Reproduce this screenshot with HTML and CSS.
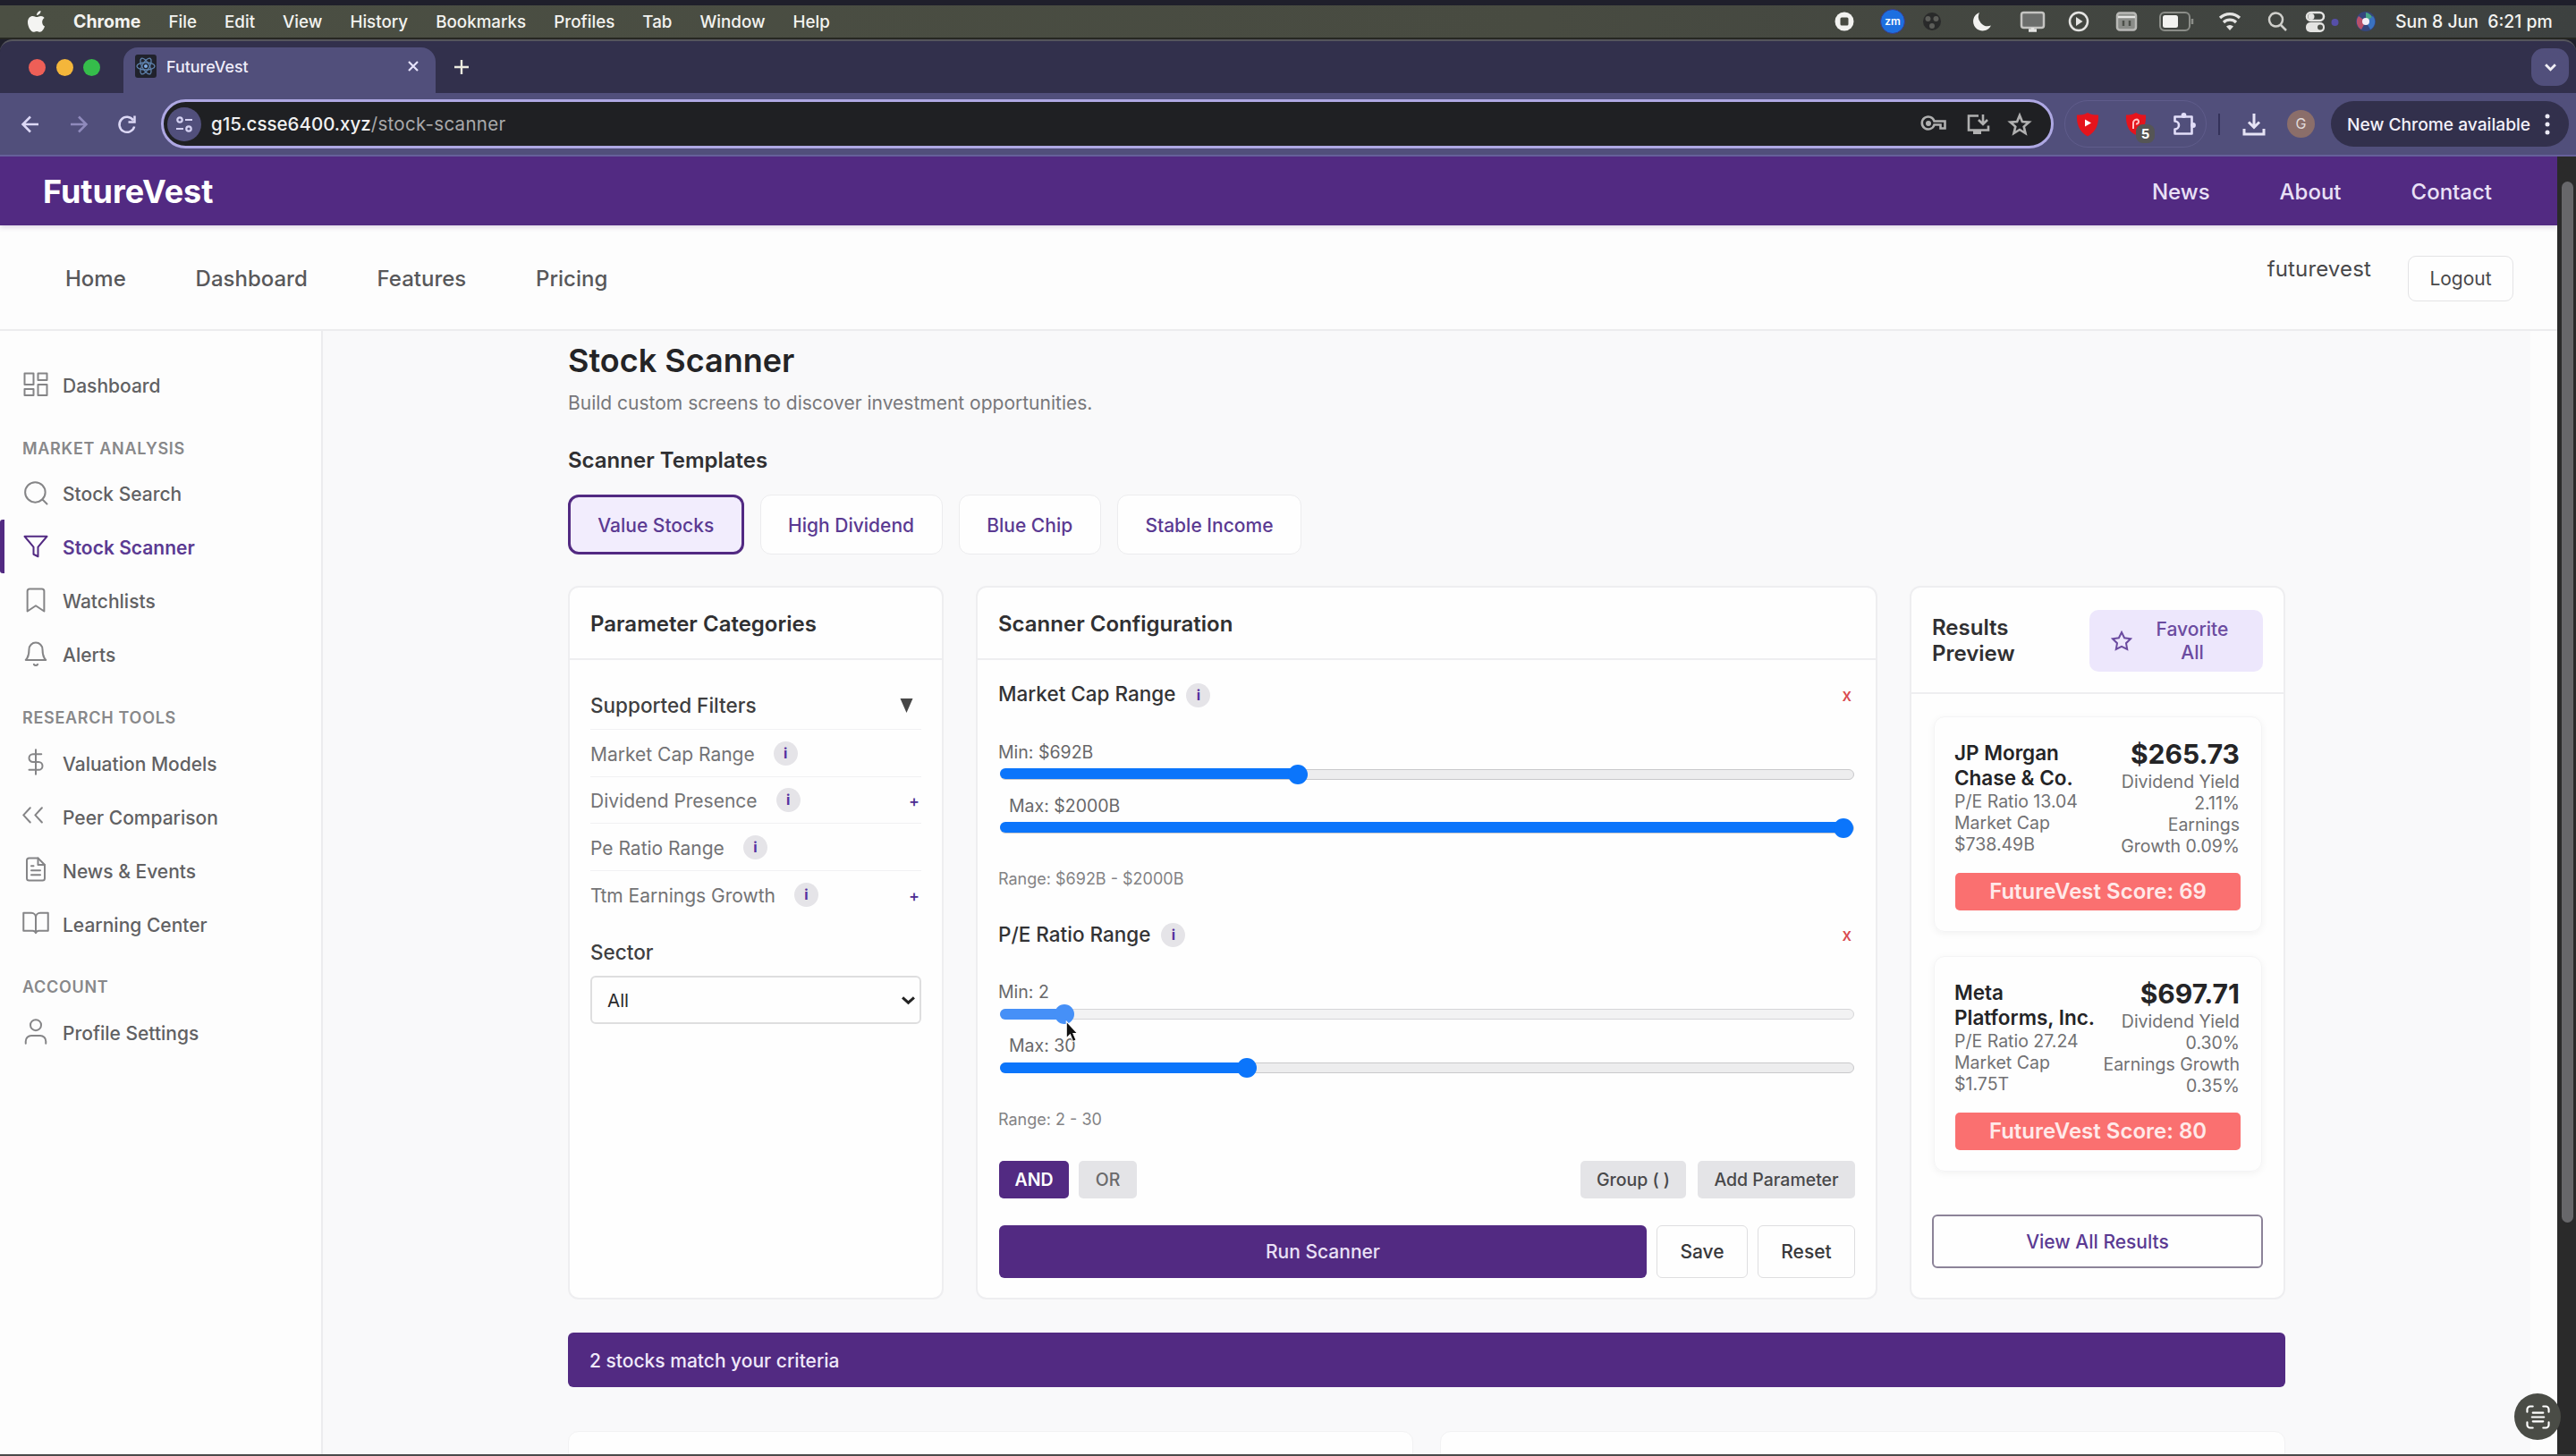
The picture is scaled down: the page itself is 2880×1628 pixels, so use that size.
FILE: index.html
```html
<!DOCTYPE html>
<html lang="en">
<head>
<meta charset="utf-8">
<title>FutureVest</title>
<link rel="stylesheet" href="styles.css">
</head>
<body>
<div class="screen">
  <div class="menubar">
    <svg class="apple" viewBox="0 0 22 26"><path d="M15.5 1c.2 2.600-2 5-4.400 5C10.900 3.500 13 1.300 15.500 1zM20 18.600c-1.200 3.400-3.200 6.200-5.200 6.200-1.400 0-2-.9-3.700-.9s-2.400.9-3.700.9C4.500 24.800 1 18.800 1 13.800 1 9.500 3.700 7 6.700 7c1.700 0 3 1.100 4.300 1.100S14 6.900 15.900 6.900c1.500 0 2.900.8 3.700 2-3.500 2.200-3 7.700.4 9.700z" fill="#f4f4f2"/></svg>
    <nav class="menus"><b>Chrome</b><span>File</span><span>Edit</span><span>View</span><span>History</span><span>Bookmarks</span><span>Profiles</span><span>Tab</span><span>Window</span><span>Help</span></nav>
    <svg class="status" viewBox="2040 0 620 36" fill="none" stroke="#e4e4e2" stroke-width="2.500">
      <circle cx="2062" cy="18" r="10.500" fill="#f2f2f0" stroke="none"/><rect x="2057.500" y="13.500" width="9" height="9" rx="1.500" fill="#484b42" stroke="none"/>
      <circle cx="2116" cy="18" r="13.500" fill="#1d6fe0" stroke="#3b3a86" stroke-width="1"/><text x="2116" y="22" class="zm">zm</text>
      <circle cx="2160" cy="18" r="10" fill="#292a2a" stroke="none"/><g fill="#5c5d59" stroke="none"><circle cx="2155.500" cy="15" r="3"/><circle cx="2164.500" cy="15" r="3"/><circle cx="2160" cy="23" r="3"/></g>
      <path d="M2213 8a10.500 10.500 0 1 0 13 14.500A10.500 10.500 0 0 1 2213 8z" fill="#f2f2f0" stroke="none"/>
      <rect x="2260" y="8" width="25" height="17" rx="2.500" fill="#6c6e6c" stroke="#c4c4c1"/><path d="M2268 28h9M2272.500 25v3" stroke-width="3.500"/>
      <circle cx="2324" cy="18" r="10"/><path d="M2321 13v10l7.500-5z" fill="#e4e4e2" stroke="none"/>
      <rect x="2367" y="8.500" width="21" height="19" rx="3" fill="#8a8c88" stroke="#b9b9b6"/><path d="M2368 13h19" /><path d="M2374 17v6M2381 17v6" stroke="#4c4f49"/>
      <rect x="2415" y="8" width="33" height="20" rx="5" stroke="#8b8d88" stroke-width="2"/><rect x="2418" y="11" width="17" height="14" rx="2.500" fill="#f2f2f0" stroke="none"/><path d="M2451 15v6" stroke="#8b8d88"/>
      <path d="M2482 14a16 16 0 0 1 22 0M2486 19a10 10 0 0 1 14 0" stroke-width="3.200"/><path d="M2489 23.500a6 6 0 0 1 8 0l-4 4.500z" fill="#e4e4e2" stroke="none"/>
      <circle cx="2544.500" cy="16" r="7.500" stroke="#cfcfcb"/><path d="M2550 22l6 6" stroke="#cfcfcb"/>
      <rect x="2579" y="8" width="19" height="9" rx="4.500"/><rect x="2578" y="19" width="21" height="11" rx="5" fill="#e4e4e2" stroke="none"/><circle cx="2584" cy="12.500" r="3.500" fill="#e4e4e2" stroke="none"/><circle cx="2594" cy="24.500" r="3" fill="#4c4f49" stroke="none"/>
      <circle cx="2610.500" cy="19" r="4" fill="#564fa8" stroke="none"/>
      <circle cx="2645" cy="18" r="11" fill="#35467e" stroke="none"/><path d="M2645 18l-8-6a10 10 0 0 0 3 15z" fill="#b8506a" stroke="none"/><path d="M2645 18l8-6a10 10 0 0 1-3 15z" fill="#3a72c0" stroke="none"/><path d="M2645 8a10 10 0 0 1 7 5l-7 5z" fill="#47a588" stroke="none"/><circle cx="2645" cy="18" r="4" fill="#f3eef8" stroke="none"/>
    </svg>
    <div class="clock">Sun 8 Jun&nbsp; 6:21 pm</div>
  </div>
  <div class="tabstrip">
    <div class="lights"><i class="red"></i><i class="amber"></i><i class="green"></i></div>
    <div class="tab">
      <svg class="favicon" viewBox="0 0 24 26"><rect width="24" height="26" rx="3" fill="#20222c"/><g fill="none" stroke="#5f83ae" stroke-width="1.300"><ellipse cx="12" cy="13" rx="10" ry="4"/><ellipse cx="12" cy="13" rx="10" ry="4" transform="rotate(60 12 13)"/><ellipse cx="12" cy="13" rx="10" ry="4" transform="rotate(120 12 13)"/></g><circle cx="12" cy="13" r="2" fill="#7fb0ea"/></svg>
      <span>FutureVest</span>
      <svg class="close" viewBox="0 0 12 12"><path d="M1 1l10 10M11 1L1 11" stroke="#e6e3fb" stroke-width="2.200"/></svg>
    </div>
    <svg class="newtab" viewBox="0 0 16 16"><path d="M8 0v16M0 8h16" stroke="#ecebdf" stroke-width="2.400"/></svg>
    <div class="tabsearch"><svg viewBox="0 0 12 8"><path d="M1 1l5 5 5-5" fill="none" stroke="#f0eff5" stroke-width="2.600"/></svg></div>
  </div>
  <div class="toolbar">
    <svg class="navicons" viewBox="20 0 140 40" fill="none" stroke="#dcd8f5" stroke-width="2.500"><path d="M43 20H26M34 11.500L25.500 20l8.500 8.500"/><path d="M79 20h17M88 11.500l8.500 8.500-8.500 8.500" stroke="#8f8abc"/><path d="M149 15.500a8.500 8.500 0 1 0 1.200 7"/><path d="M150.500 10.500v7h-7"/></svg>
    <div class="urlbar">
      <span class="site"><svg viewBox="0 0 20 20" fill="none" stroke="#d5d2f3" stroke-width="2.200"><circle cx="5" cy="5" r="2.700"/><path d="M11 5h8M1 15h8"/><circle cx="15" cy="15" r="2.700"/></svg></span>
      <span class="url">g15.csse6400.xyz<em>/stock-scanner</em></span>
      <svg class="urlicons" viewBox="2140 0 140 40" fill="none" stroke="#b0b0b0" stroke-width="2.600"><path d="M2162.500 16.500h12v8h-5v-4h-7a7 7 0 1 1 0-4z"/><circle cx="2156" cy="19" r="3" fill="#b0b0b0" stroke="none"/><path d="M2212 10.500h-11v16h22v-5"/><path d="M2206 29h9" stroke-width="4"/><path d="M2217 9v11M2212 15l5 5 5-5"/><path d="M2258 10l2.900 7 7.600.6-5.800 5 1.800 7.400-6.500-4-6.500 4 1.800-7.400-5.800-5 7.600-.6z"/></svg>
    </div>
    <div class="extensions">
      <svg viewBox="0 0 28 28"><path d="M14 1c4 2.500 8 2.500 12 2.500C26.500 13 24 22 14 27.500 4 22 1.500 13 2 3.500 6 3.500 10 3.500 14 1z" fill="#e5141c"/><path d="M11 8.500v8l7-4z" fill="#fff"/></svg>
      <span class="ext2"><svg viewBox="0 0 28 28"><path d="M14 1c4 2.500 8 2.500 11 2.500C25.500 13 23 22 14 26 5 22 2.500 13 3 3.500 6 3.500 10 3.500 14 1z" fill="#e5141c"/><path d="M11 19v-6a4 4 0 0 1 4-4.500 2.500 2.500 0 1 1-1 5" fill="none" stroke="#ffc4c4" stroke-width="2"/></svg><b>5</b></span>
      <svg viewBox="0 0 28 28"><path d="M3.500 5.500h19v19h-19v-5a4.500 4.500 0 0 0 0-9z" fill="none" stroke="#e2def9" stroke-width="2.600" stroke-linejoin="round"/><circle cx="13.500" cy="4" r="2.900" fill="#e2def9"/><circle cx="24" cy="15" r="2.900" fill="#e2def9"/></svg>
    </div>
    <div class="divider"></div>
    <svg class="download" viewBox="0 0 28 28" fill="none" stroke="#e6e3f5" stroke-width="3"><path d="M14 2v15M8 11.500l6 6 6-6M3 19v6h22v-6"/></svg>
    <div class="avatar">G</div>
    <div class="update">New Chrome available<svg viewBox="0 0 6 24"><g fill="#eceaf5"><circle cx="3" cy="3" r="2.500"/><circle cx="3" cy="12" r="2.500"/><circle cx="3" cy="21" r="2.500"/></g></svg></div>
  </div>

  <div class="viewport">
    <div class="page">
      <header class="topbar"><strong>FutureVest</strong><nav><a>News</a><a>About</a><a>Contact</a></nav></header>
      <div class="subnav"><nav><a>Home</a><a>Dashboard</a><a>Features</a><a>Pricing</a></nav><span class="user">futurevest</span><button class="logout">Logout</button></div>
      <div class="body">
        <aside class="sidebar">
          <a><svg viewBox="0 0 24 24"><rect x="2" y="2" width="8" height="10"/><rect x="14" y="2" width="8" height="6"/><rect x="14" y="12" width="8" height="9.500"/><rect x="2" y="16" width="8" height="5.500"/></svg><span>Dashboard</span></a>
          <h6>MARKET ANALYSIS</h6>
          <a><svg viewBox="0 0 24 24"><circle cx="11.500" cy="11.500" r="9"/><path d="M18 18l4 4"/></svg><span>Stock Search</span></a>
          <a class="active"><svg viewBox="0 0 24 24"><path d="M22 3H2l8 9.500V19l4 2v-8.500z"/></svg><span>Stock Scanner</span></a>
          <a><svg viewBox="0 0 24 24"><path d="M19.500 22L12 17l-7.500 5V4a2 2 0 0 1 2-2h11a2 2 0 0 1 2 2z"/></svg><span>Watchlists</span></a>
          <a><svg viewBox="0 0 24 24"><path d="M18 8A6 6 0 0 0 6 8c0 7-3 9.500-3 9.500h18S18 15 18 8"/><path d="M13.700 21.500a2 2 0 0 1-3.400 0"/></svg><span>Alerts</span></a>
          <h6>RESEARCH TOOLS</h6>
          <a><svg viewBox="0 0 24 24"><path d="M12 1v22M17 5H9.500a3.500 3.500 0 0 0 0 7h5a3.500 3.500 0 0 1 0 7H6"/></svg><span>Valuation Models</span></a>
          <a><svg viewBox="0 0 24 24"><path d="M7 18l-6-6.500L7 5M17.500 18l-6-6.500 6-6.500"/></svg><span>Peer Comparison</span></a>
          <a><svg viewBox="0 0 24 24"><path d="M14 2H6a2 2 0 0 0-2 2v16a2 2 0 0 0 2 2h12a2 2 0 0 0 2-2V8z"/><path d="M14 2v6h6M16 13H8M16 17H8M10 9H8"/></svg><span>News &amp; Events</span></a>
          <a><svg viewBox="0 0 24 24"><path d="M1 3h7a4 4 0 0 1 4 4v14a3 3 0 0 0-3-2H1zM23 3h-7a4 4 0 0 0-4 4v14a3 3 0 0 1 3-2h8z"/></svg><span>Learning Center</span></a>
          <h6>ACCOUNT</h6>
          <a><svg viewBox="0 0 24 24"><path d="M21 23v-2a5 5 0 0 0-5-5H8a5 5 0 0 0-5 5v2"/><circle cx="12" cy="6.500" r="4.800"/></svg><span>Profile Settings</span></a>
        </aside>
        <main>
          <h1>Stock Scanner</h1>
          <p class="lead">Build custom screens to discover investment opportunities.</p>
          <h2>Scanner Templates</h2>
          <div class="templates"><button class="on">Value Stocks</button><button>High Dividend</button><button>Blue Chip</button><button>Stable Income</button></div>
          <div class="columns">
            <section class="card">
              <div class="card-head">Parameter Categories</div>
              <div class="filters">
                <div class="group">Supported Filters<svg viewBox="0 0 14 16"><path d="M0 0h14L7 16z" fill="#474747"/></svg></div>
                <div class="filter">Market Cap Range<i class="info">i</i></div>
                <div class="filter">Dividend Presence<i class="info">i</i><b>+</b></div>
                <div class="filter">Pe Ratio Range<i class="info">i</i></div>
                <div class="filter">Ttm Earnings Growth<i class="info">i</i><b>+</b></div>
                <div class="sector">Sector</div>
                <div class="select">All<svg viewBox="0 0 14 10"><path d="M1 2l6 5.500L13 2" fill="none" stroke="#222" stroke-width="2.800"/></svg></div>
              </div>
            </section>
            <section class="card">
              <div class="card-head">Scanner Configuration</div>
              <div class="config">
                <div class="param">
                  <div class="param-head">Market Cap Range<i class="info">i</i><b>x</b></div>
                  <label>Min: $692B</label>
                  <div class="slider"><div class="track"><div class="fill" style="width:35%"></div></div><i class="thumb" style="left:35%"></i></div>
                  <label class="max">Max: $2000B</label>
                  <div class="slider"><div class="track"><div class="fill" style="width:98.600%"></div></div><i class="thumb" style="left:98.600%"></i></div>
                  <div class="range">Range: $692B - $2000B</div>
                </div>
                <div class="param">
                  <div class="param-head">P/E Ratio Range<i class="info">i</i><b>x</b></div>
                  <label>Min: 2</label>
                  <div class="slider hover"><div class="track"><div class="fill" style="width:7.700%"></div></div><i class="thumb" style="left:7.700%"></i>
                    <svg class="cursor" viewBox="0 0 14 24"><path d="M1 1v18l4-4 3 7.500 3.300-1.500-3-7H13z" fill="#111" stroke="#fff" stroke-width="1"/></svg></div>
                  <label class="max">Max: 30</label>
                  <div class="slider"><div class="track"><div class="fill" style="width:29%"></div></div><i class="thumb" style="left:29%"></i></div>
                  <div class="range">Range: 2 - 30</div>
                </div>
                <div class="logic"><button class="and">AND</button><button class="or">OR</button><button class="grp">Group ( )</button><button class="add">Add Parameter</button></div>
                <div class="run"><button class="primary">Run Scanner</button><button class="save">Save</button><button class="reset">Reset</button></div>
              </div>
            </section>
            <section class="card">
              <div class="card-head preview"><span>Results<br>Preview</span><button><svg viewBox="0 0 24 24"><path d="M12 2l3.100 6.300 6.900 1-5 4.900 1.200 6.800-6.200-3.200L5.800 21 7 14.200l-5-4.900 6.900-1z" fill="none" stroke="#6b4ba0" stroke-width="2"/></svg><span>Favorite<br>All</span></button></div>
              <div class="results">
                <article><div class="stock"><div><strong>JP Morgan<br>Chase &amp; Co.</strong><p>P/E Ratio 13.04<br>Market Cap<br>$738.49B</p></div><div class="num"><em>$265.73</em><p>Dividend Yield<br>2.11%<br>Earnings<br>Growth 0.09%</p></div></div><div class="score">FutureVest Score: 69</div></article>
                <article><div class="stock"><div><strong>Meta<br>Platforms, Inc.</strong><p>P/E Ratio 27.24<br>Market Cap<br>$1.75T</p></div><div class="num"><em>$697.71</em><p>Dividend Yield<br>0.30%<br>Earnings Growth<br>0.35%</p></div></div><div class="score">FutureVest Score: 80</div></article>
                <button class="viewall">View All Results</button>
              </div>
            </section>
          </div>
          <div class="banner">2 stocks match your criteria</div>
          <div class="matches"><div></div><div></div></div>
        </main>
      </div>
    </div>
    <div class="scrollbar"><div></div></div>
  </div>
  <div class="scan"><svg viewBox="0 0 28 28" fill="none" stroke="#fff" stroke-width="2.200" stroke-linecap="round"><path d="M1.500 8V5a3.500 3.500 0 0 1 3.500-3.500h3M20 1.500h3A3.500 3.500 0 0 1 26.500 5v3M26.500 20v3a3.500 3.500 0 0 1-3.500 3.500h-3M8 26.500H5A3.500 3.500 0 0 1 1.500 23v-3M8 9h12M7 14h14M8 19h12"/></svg></div>
</div>
</body>
</html>
```
FILE: styles.css
```css
* { box-sizing: border-box; }
body, h1, h2, h6, p { margin: 0; }
body { font-family: Inter, "Liberation Sans", sans-serif; background: #1f1f2b; }
button { font: inherit; padding: 0; margin: 0; border: 0; display: flex; align-items: center; justify-content: center; }
i, em { font-style: normal; }
svg { display: block; flex: none; }
.screen { width: 2880px; height: 1628px; overflow: hidden; position: relative; display: flex; flex-direction: column; padding-top: 6px; border-bottom: 2px solid #4a4a4a; }

/* system menu bar */
.menubar { height: 38px; flex: none; display: flex; align-items: center; background: linear-gradient(90deg, #4b4f43, #484b41 60%, #3d4140); color: #f3f3f0; border-bottom: 2px solid #262722; }
.apple { width: 22px; height: 26px; margin-left: 30px; }
.menus { display: flex; align-items: baseline; gap: 31px; margin-left: 30px; font-size: 18.800px; font-weight: 500; white-space: nowrap; }
.menus b { font-weight: 700; font-size: 19.500px; }
.status { width: 620px; height: 36px; margin-left: auto; }
.zm { font-size: 12px; font-weight: 600; fill: #fff; stroke: none; text-anchor: middle; }
.clock { width: 202px; margin-left: 18px; font-size: 19.400px; font-weight: 500; white-space: nowrap; }

/* browser frame */
.tabstrip { height: 60px; flex: none; display: flex; align-items: center; background: #32304c; border-top: 2px solid #55555c; border-radius: 14px 14px 0 0; }
.lights { display: flex; gap: 11.500px; margin-left: 32px; }
.lights i { width: 19px; height: 19px; border-radius: 50%; }
.red { background: #ee5f57; }
.amber { background: #f4b63b; }
.green { background: #35bd4b; }
.tab { width: 349px; height: 51px; align-self: flex-end; margin-left: 26px; background: #514f7b; border-radius: 16px 16px 0 0; display: flex; align-items: center; padding: 0 19px 9px 13px; color: #efedfa; font-size: 17.900px; font-weight: 500; }
.favicon { width: 24px; height: 26px; margin-right: 11px; }
.close { width: 12px; height: 12px; margin-left: auto; }
.newtab { width: 16px; height: 16px; margin-left: 21px; }
.tabsearch { width: 42px; height: 42px; border-radius: 14px; background: #514f7b; margin: 0 8px 0 auto; display: flex; align-items: center; justify-content: center; }
.tabsearch svg { width: 13px; height: 9px; }
.toolbar { height: 71px; flex: none; background: #514f7b; border-bottom: 2px solid #66609a; display: flex; align-items: center; padding-left: 20px; }
.navicons { width: 140px; height: 40px; }
.urlbar { width: 2116px; height: 55px; margin-left: 20px; border: 3px solid #aea8e3; border-radius: 28px; background: #1f2023; display: flex; align-items: center; color: #f1f1f1; }
.site { width: 38px; height: 38px; border-radius: 50%; background: #514f7b; margin-left: 4px; display: flex; align-items: center; justify-content: center; }
.site svg { width: 20px; height: 20px; }
.url { margin-left: 11px; font-size: 20.500px; font-weight: 500; }
.url em { color: #a9a9aa; letter-spacing: .3px; font-weight: 400; }
.urlicons { width: 140px; height: 40px; margin-left: auto; margin-right: 13px; }
.extensions { width: 159px; height: 53px; margin-left: 12px; border: 1.500px solid #5f5c8b; border-radius: 26px; display: flex; align-items: center; justify-content: space-between; padding: 0 10px 0 11px; }
.extensions svg { width: 28px; height: 28px; }
.ext2 { position: relative; }
.ext2 b { position: absolute; left: 14px; top: 14px; width: 21px; height: 21px; border-radius: 8px; background: #555; color: #fff; font-size: 15px; line-height: 21px; text-align: center; }
.divider { width: 2px; height: 24px; background: #34325a; margin-left: 13px; }
.download { width: 28px; height: 28px; margin-left: 24px; }
.avatar { width: 31px; height: 31px; border-radius: 50%; background: #8b6e6a; color: #e2dcdc; font-size: 16px; line-height: 31px; text-align: center; margin-left: 23px; }
.update { width: 266px; height: 51px; margin-left: 18px; border-radius: 26px; background: #32304c; color: #f2f0fa; display: flex; align-items: center; justify-content: space-between; padding: 0 21px 0 18px; font-size: 19.200px; font-weight: 500; white-space: nowrap; }
.update svg { width: 6px; height: 24px; }

.viewport { flex: 1; min-height: 0; display: flex; background: #2a2a2a; }
.page { width: 2859px; background: #fdfdfd; display: flex; flex-direction: column; overflow: hidden; }
.scrollbar { width: 21px; padding: 28px 3px 0 5px; }
.scrollbar div { height: 1164px; border-radius: 7px; background: #67676a; }

/* site header */
.topbar { height: 77px; flex: none; background: #522a82; display: flex; align-items: center; justify-content: space-between; padding: 1px 73px 0 48px; color: #fff; position: relative; box-shadow: 0 2px 6px rgba(82, 42, 130, .2); }
.topbar strong { font-size: 36px; font-weight: 700; }
.topbar nav { display: flex; gap: 78px; font-size: 24px; font-weight: 500; color: #e9e0f6; }
.subnav { height: 118px; flex: none; border-bottom: 2px solid #ececee; display: flex; align-items: center; padding: 2px 49px 0 73px; color: #58585a; }
.subnav nav { display: flex; gap: 77.800px; font-size: 24px; font-weight: 500; margin-right: auto; }
.user { font-size: 24px; letter-spacing: .15px; margin-bottom: 21px; color: #48484a; }
.logout { width: 118px; height: 51px; margin-left: 41px; border: 1.500px solid #e3e3e5; border-radius: 9px; background: #fefefe; font-size: 21px; color: #48484a; }
.body { display: flex; flex: 1; min-height: 0; }

.sidebar { width: 361px; flex: none; border-right: 2px solid #ececee; padding-top: 30px; }
.sidebar a { display: flex; align-items: center; height: 60px; padding-left: 25px; gap: 15px; font-size: 21px; font-weight: 500; color: #616163; }
.sidebar a span { padding-top: 3px; }
.sidebar svg { width: 30px; height: 30px; fill: none; stroke: #858587; stroke-width: 1.600; stroke-linecap: round; stroke-linejoin: round; }
.sidebar h6 { height: 40px; line-height: 41px; margin-top: 21px; padding-left: 25px; font-size: 18px; font-weight: 600; letter-spacing: .7px; color: #88888a; }
.sidebar .active { color: #5b3a92; border-left: 5px solid #522a82; border-radius: 3px; padding-left: 20px; font-weight: 600; }
.sidebar .active svg { stroke: #522a82; }
.sidebar h6:nth-of-type(n+2) ~ a span { padding-top: 4px; }

/* scanner page */
main { width: 2468px; flex: none; background: #f9f9fa; padding: 11px 274px 0; color: #242426; }
h1 { font-size: 36px; line-height: 44px; font-weight: 600; }
.lead { font-size: 21px; line-height: 30px; margin-top: 11px; color: #77777a; }
h2 { font-size: 24px; line-height: 30px; font-weight: 600; margin-top: 34px; color: #303032; }
.templates { display: flex; gap: 18px; margin-top: 23px; height: 67px; }
.templates button { padding: 1px 30.600px 0; border: 1.500px solid #ececee; border-radius: 12px; background: #fefefe; color: #5b3a92; font-size: 21px; font-weight: 500; }
.templates .on { border: 3px solid #522a82; padding: 1px 30.300px 0; background: #f2edfd; }
.columns { display: grid; grid-template-columns: 420px 1008px 420px; gap: 36px; height: 798px; margin-top: 35px; }
.card { background: #fefefe; border: 2px solid #eeeef0; border-radius: 12px; }
.card-head { height: 81px; border-bottom: 2px solid #eeeef0; padding: 1px 23px 0; display: flex; align-items: center; font-size: 24px; font-weight: 600; color: #303032; }
.info { width: 27px; height: 27px; border-radius: 50%; background: #e5e4e8; color: #5530a0; font-size: 16px; font-weight: 700; line-height: 27px; text-align: center; }

.filters { padding: 24px 23px 0; }
.group { height: 54px; border-bottom: 1.500px solid #f1f1f3; display: flex; align-items: center; justify-content: space-between; padding-right: 9px; font-size: 22.500px; font-weight: 500; color: #3f3f41; }
.group svg { width: 15px; height: 16px; }
.filter { height: 52.500px; border-bottom: 1.500px solid #f1f1f3; display: flex; align-items: center; padding: 3px 2px 0 0; font-size: 21px; color: #737375; }
.filter:nth-child(5) { border: 0; }
.filter .info { margin: -2px 0 0 21px; }
.filter b { margin-left: auto; color: #4b2a91; font-weight: 500; font-size: 18px; }
.sector { margin-top: 22px; height: 34px; line-height: 34px; font-size: 22.500px; font-weight: 500; color: #3f3f41; }
.select { margin-top: 9px; height: 54px; border: 2px solid #dededf; border-radius: 6px; display: flex; align-items: center; justify-content: space-between; padding: 0 5px 0 17px; font-size: 20.500px; color: #2a2a2c; }
.select svg { width: 15px; height: 11px; }

.config { padding: 16px 23px 0; }
.param { margin-bottom: 27.500px; }
.param-head { display: flex; align-items: center; height: 44px; margin-bottom: 31.500px; padding-bottom: 1px; font-size: 22.500px; font-weight: 500; color: #333335; }
.param-head .info { margin-left: 12px; margin-top: 3px; }
.param-head b { margin: 3px 4px 0 auto; color: #d94b50; font-weight: 500; font-size: 19px; }
.param label { display: block; height: 24px; line-height: 23px; font-size: 19.500px; color: #68686a; }
.param .max { margin: 11px 0 0 12px; }
.slider { position: relative; height: 25px; padding: 6px 1px 0 2px; }
.track { height: 12px; border: 1.500px solid #c9c9cb; border-radius: 6px; background: #ededee; }
.fill { height: 12px; margin: -1.500px 0 0 -1.500px; border-radius: 6px 0 0 6px; background: #0b75fb; }
.thumb { position: absolute; top: 1px; width: 22px; height: 22px; margin-left: -11px; border-radius: 50%; background: #0b75fb; }
.hover .fill, .hover .thumb { background: #4690f7; }
.hover .track { background: #f2f2f3; border-color: #d6d6d8; }
.cursor { position: absolute; left: 75px; top: 19px; width: 15px; height: 25px; }
.range { height: 24px; line-height: 24px; margin-top: 32.500px; font-size: 18px; color: #838385; }
.logic { display: flex; height: 42px; margin-top: 34.500px; padding-left: 1px; font-size: 19.500px; font-weight: 500; }
.logic button { border-radius: 5px; background: #e4e4e7; color: #48484a; }
.logic .and { width: 78px; background: #522a82; color: #fff; font-weight: 600; }
.logic .or { width: 65px; margin-left: 11px; color: #6a6a6c; }
.logic .grp { width: 118px; margin-left: auto; }
.logic .add { width: 176px; margin-left: 13px; }
.run { display: flex; gap: 11px; height: 59px; margin-top: 29.500px; padding-left: 1px; font-size: 21px; font-weight: 500; }
.run button { border: 1.500px solid #dedee0; border-radius: 6px; background: #fefefe; color: #38383a; padding-top: 1px; }
.run .primary { flex: 1; background: #522a82; color: #e9e0f6; border: 0; }
.run .save { width: 102px; }
.run .reset { width: 109px; }

.preview { height: 119px; justify-content: space-between; line-height: 29px; }
.preview button { width: 194px; height: 69px; padding: 1px 15px 0 0; border-radius: 10px; background: #ede7fc; color: #6b4ba0; font-size: 21px; font-weight: 500; line-height: 25.500px; gap: 27px; text-align: center; }
.preview button svg { width: 24px; height: 24px; }
.results { padding: 25px 23px 0; }
article { height: 241px; margin: 0 1px 27px 2px; padding: 25px 23px 0 22px; border-radius: 12px; border: 1.500px solid #f4f4f5; box-shadow: 0 2px 8px rgba(0, 0, 0, .05); }
.stock { display: flex; justify-content: space-between; height: 149px; white-space: nowrap; }
.stock strong { display: block; padding-top: 1px; font-size: 22.500px; line-height: 28px; font-weight: 600; }
.stock p { font-size: 19.500px; line-height: 24px; color: #717173; margin-top: 0; }
.num { text-align: right; padding-right: 1px; }
.num em { display: block; font-size: 30px; line-height: 36px; font-weight: 700; margin-top: -2px; }
.num p { margin-top: 1px; }
.score { height: 42px; margin-left: 1px; border-radius: 5px; background: #fa7070; color: #ffe9e9; font-size: 24px; font-weight: 600; line-height: 42px; text-align: center; }
.viewall { width: 370px; height: 60px; margin-top: 48px; border: 2px solid #8c8398; border-radius: 6px; background: #fefefe; color: #5b3a92; font-size: 21px; font-weight: 500; }
.banner { height: 61px; margin-top: 37px; padding-left: 24px; border-radius: 6px; background: #522a82; color: #efe8fa; font-size: 21px; font-weight: 500; line-height: 63px; }
.matches { display: grid; grid-template-columns: 945px 945px; gap: 30px; margin-top: 49px; }
.matches div { height: 80px; border-radius: 12px; background: #fefefe; border: 1.500px solid #f2f2f3; }
.scan { position: absolute; left: 2811px; top: 1558px; width: 52px; height: 52px; border-radius: 50%; background: #4a4c46; display: flex; align-items: center; justify-content: center; }
.scan svg { width: 27px; height: 27px; }
```
